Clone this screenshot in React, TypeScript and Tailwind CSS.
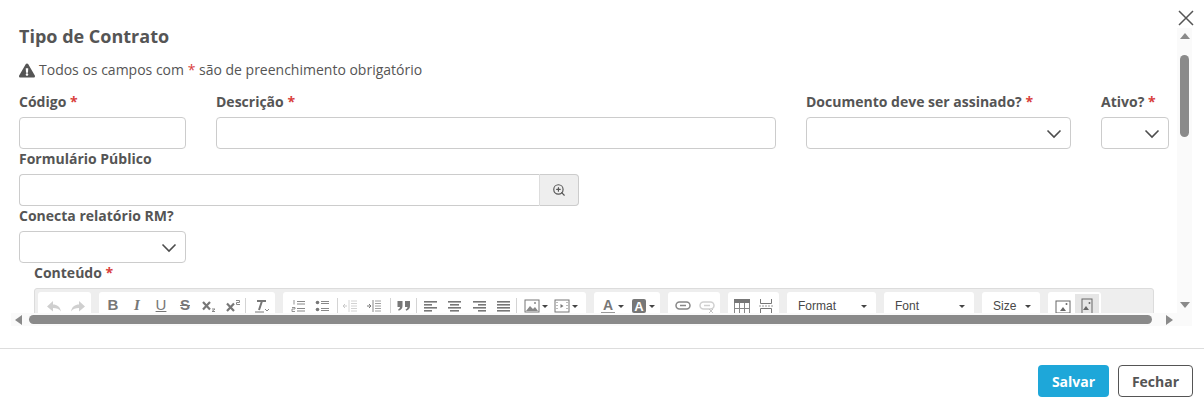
import type { ReactNode } from "react";
import { ZoomIn } from "lucide-react";
import { FaExclamationTriangle } from "react-icons/fa";

const Req = () => <span className="text-[#d9403c]"> *</span>;

function Label({ children }: { children: ReactNode }) {
  return <label className="block h-[19px] text-[14px] leading-[19px] font-bold text-[#555] whitespace-nowrap">{children}</label>;
}

function Chevron() {
  return (
    <svg width="16" height="10" viewBox="0 0 16 10" fill="none" stroke="#4d4d4d" strokeWidth="1.6" className="absolute right-[8px] top-[11px]">
      <path d="M1.5 1.5 8 8l6.5-6.5" />
    </svg>
  );
}

function Box({ className = "", chevron = false }: { className?: string; chevron?: boolean }) {
  return (
    <div className={`relative mt-[6px] h-[32px] rounded-[4px] border border-[#ccc] bg-white ${className}`}>
      {chevron && <Chevron />}
    </div>
  );
}

function Slot({ children, w = "w-[24px]" }: { children: ReactNode; w?: string }) {
  return <div className={`flex h-[16px] shrink-0 items-start justify-center ${w}`}>{children}</div>;
}

function Sep({ className = "" }: { className?: string }) {
  return <div className={`h-[16px] w-px shrink-0 bg-[#d4d4d4] ${className}`} />;
}

function Caret() {
  return <div className="h-0 w-0 border-x-[3px] border-t-[3px] border-x-transparent border-t-[#444]" />;
}

function Icon({ children, w = 16 }: { children: ReactNode; w?: number }) {
  return (
    <svg width={w} height="16" viewBox={`0 0 ${w} 16`} fill="none" className="shrink-0">
      {children}
    </svg>
  );
}

function Letter({ ch, cls }: { ch: string; cls: string }) {
  return <span className={`block h-[14px] text-[15px] leading-[14px] text-[#777] ${cls}`}>{ch}</span>;
}

function Lines({ rows, color = "#777" }: { rows: [number, number][]; color?: string }) {
  return (
    <Icon>
      {rows.map(([x, w], i) => (
        <rect key={i} x={x} y={3 + i * 3} width={w} height="1.6" fill={color} />
      ))}
    </Icon>
  );
}

function Group({ className, children }: { className: string; children: ReactNode }) {
  return <div className={`flex h-[36px] shrink-0 items-start rounded-[3px] bg-white pt-[6px] ${className}`}>{children}</div>;
}

function Combo({ label, className }: { label: string; className: string }) {
  return (
    <div className={`relative h-[36px] shrink-0 rounded-[3px] bg-white pl-[11px] pt-[5px] font-['Liberation_Sans',sans-serif] text-[12px] leading-[18px] text-[#484848] ${className}`}>
      {label}
      <div className="absolute right-[9px] top-[13px]">
        <Caret />
      </div>
    </div>
  );
}

function Toolbar() {
  return (
    <div className="ml-[15px] flex h-[40px] w-[1120px] gap-2 rounded-[3px] border border-[#dcdcdc] bg-[#eee] pl-[3px] pt-[3px]">
      <Group className="w-[53px] pl-[4px]">
        <Slot>
          <Icon><path d="M1 8.5 7 3v3.5c4 0 7 2 8 7-2-3-4.500-3.500-8-3.500v3.500z" fill="#cfcfcf" /></Icon>
        </Slot>
        <Slot>
          <Icon><path d="M15 8.500 9 3v3.500c-4 0-7 2-8 7 2-3 4.500-3.500 8-3.500v3.500z" fill="#cfcfcf" /></Icon>
        </Slot>
      </Group>
      <Group className="w-[176px] pl-[2px]">
        <Slot><Letter ch="B" cls="font-bold font-['Liberation_Sans',sans-serif]" /></Slot>
        <Slot><Letter ch="I" cls="font-bold italic font-['Liberation_Serif',serif]" /></Slot>
        <Slot><Letter ch="U" cls="underline font-['Liberation_Sans',sans-serif]" /></Slot>
        <Slot><Letter ch="S" cls="font-bold line-through font-['Liberation_Sans',sans-serif]" /></Slot>
        <Slot>
          <Icon>
            <path d="M2 4l7 7.500M9 4l-7 7.500" stroke="#777" strokeWidth="2.2" />
            <path d="M11 11h3l-3 2.500h3" stroke="#888" />
          </Icon>
        </Slot>
        <Slot>
          <Icon w={17}>
            <path d="M2 5.500l7 7.500M9 5.500l-7 7.500" stroke="#777" strokeWidth="2.2" />
            <path d="M11 2.500h3.500v2h-3v2h3.500" stroke="#888" />
          </Icon>
        </Slot>
        <Sep />
        <Slot w="w-[24px] ml-[4px]">
          <Icon>
            <path d="M3 3h9M8 3l-3 9" stroke="#777" strokeWidth="2" />
            <path d="M1 14h9" stroke="#777" />
            <path d="M11 11l2 2 2-2" stroke="#888" />
          </Icon>
        </Slot>
      </Group>
      <Group className="w-[303px] pl-[3px]">
        <Slot>
          <Icon w={14}>
            <path d="M3 2v4.500M1 9.500h3V11H1v2.500h3" stroke="#888" strokeWidth="0.9" />
            <path d="M6 3.500h8M6 6h8M6 10.500h8M6 13h8" stroke="#888" strokeWidth="1.1" />
          </Icon>
        </Slot>
        <Slot>
          <Icon w={14}>
            <circle cx="2.500" cy="4.500" r="1.800" fill="#777" />
            <circle cx="2.500" cy="11.500" r="1.800" fill="#777" />
            <path d="M6 3.500h8M6 5.500h8M6 10.500h8M6 12.500h8" stroke="#888" strokeWidth="1" />
          </Icon>
        </Slot>
        <Sep className="ml-[3px]" />
        <Slot>
          <Icon>
            <path d="M9 3h6M9 5.500h6M9 8h6M9 10.500h6M9 13h6" stroke="#d2d2d2" />
            <path d="M7 2v12" stroke="#d6d6d6" />
            <path d="M1 8h4M3 6L1 8l2 2" stroke="#c9c9c9" />
          </Icon>
        </Slot>
        <Slot>
          <Icon>
            <path d="M9 3h6M9 5.500h6M9 8h6M9 10.500h6M9 13h6" stroke="#a0a0a0" />
            <path d="M7 2v12" stroke="#888" />
            <path d="M1 8h4M3 6l2 2-2 2" stroke="#777" />
          </Icon>
        </Slot>
        <Sep className="ml-[4px]" />
        <Slot w="w-[24px] ml-[1px]">
          <Icon>
            <path d="M1.500 3h5v5c0 2.500-1.500 4-3.800 4.800l-.6-1.200c1.200-.6 1.800-1.400 1.900-2.600H1.500zM9 3h5v5c0 2.500-1.500 4-3.800 4.800l-.6-1.200c1.200-.6 1.800-1.400 1.900-2.600H9z" fill="#777" />
          </Icon>
        </Slot>
        <Sep />
        <Slot w="w-[24px] ml-[2px]"><Lines rows={[[1, 13], [1, 8], [1, 13], [1, 8]]} /></Slot>
        <Slot><Lines rows={[[1, 13], [3, 9], [1, 13], [3, 9]]} /></Slot>
        <Slot><Lines rows={[[2, 13], [7, 8], [2, 13], [7, 8]]} /></Slot>
        <Slot><Lines rows={[[2, 13], [2, 13], [2, 13], [2, 13]]} /></Slot>
        <Sep className="ml-[1px]" />
        <div className="ml-[7px] flex h-[16px] w-[30px] shrink-0 items-start gap-[2px]">
          <Icon>
            <rect x="1" y="2" width="14" height="12" stroke="#777" fill="#fff" />
            <path d="M2 13l4-5 3 3 2-2 3 4z" fill="#888" />
            <circle cx="11" cy="5" r="1" fill="#888" />
          </Icon>
          <div className="mt-[7px]"><Caret /></div>
        </div>
        <div className="flex h-[16px] shrink-0 items-start gap-[2px]">
          <Icon>
            <rect x="1" y="2" width="14" height="12" stroke="#777" fill="#fff" />
            <path d="M6.500 6v4l3-2z" fill="#777" />
            <path d="M3 4v1M3 7v1M3 10v1M13 4v1M13 7v1M13 10v1" stroke="#777" />
          </Icon>
          <div className="mt-[7px]"><Caret /></div>
        </div>
      </Group>
      <Group className="w-[66px] pl-[6px]">
        <div className="flex h-[16px] w-[31px] shrink-0 items-start gap-[2px]">
          <Icon>
            <text x="8" y="12" textAnchor="middle" fontFamily="Liberation Sans" fontWeight="bold" fontSize="14" fill="#777">A</text>
            <rect x="1" y="14" width="14" height="1.500" fill="#999" />
          </Icon>
          <div className="mt-[7px]"><Caret /></div>
        </div>
        <div className="flex h-[16px] shrink-0 items-start gap-[2px]">
          <Icon>
            <rect x="1" y="1" width="14" height="14" rx="2" fill="#777" />
            <text x="8" y="13" textAnchor="middle" fontFamily="Liberation Sans" fontWeight="bold" fontSize="13" fill="#fff">A</text>
          </Icon>
          <div className="mt-[7px]"><Caret /></div>
        </div>
      </Group>
      <Group className="w-[52px] pl-[3px]">
        <Slot>
          <Icon>
            <rect x="1" y="4" width="14" height="7" rx="3.500" stroke="#888" strokeWidth="1.500" />
            <path d="M5 7.500h6" stroke="#888" strokeWidth="1.500" />
          </Icon>
        </Slot>
        <Slot>
          <Icon>
            <rect x="1" y="4" width="14" height="7" rx="3.500" stroke="#d0d0d0" strokeWidth="1.500" />
            <path d="M5 7.500h6" stroke="#d0d0d0" strokeWidth="1.500" />
            <path d="M10 11l4 4M14 11l-4 4" stroke="#c4c4c4" />
          </Icon>
        </Slot>
      </Group>
      <Group className="w-[51px] pl-[2px]">
        <Slot>
          <Icon>
            <rect x="0" y="1" width="16" height="4" fill="#777" />
            <path d="M.5 5v10.500h15V5M5.500 5v10M10.500 5v10M0 10.500h16" stroke="#888" />
          </Icon>
        </Slot>
        <Slot>
          <Icon>
            <path d="M2.500 1v4.500h11V1M2.500 15v-4.500h11V15" stroke="#777" />
            <path d="M1 8h14" stroke="#999" strokeDasharray="2 1" />
          </Icon>
        </Slot>
      </Group>
      <Combo label="Format" className="w-[89px]" />
      <Combo label="Font" className="w-[90px]" />
      <Combo label="Size" className="w-[58px]" />
      <Group className="w-[53px] pl-[3px]">
        <Slot>
          <Icon>
            <rect x="1" y="3" width="14" height="12" stroke="#666" />
            <path d="M5 13l3-4 3 4z" fill="#666" />
            <circle cx="11.500" cy="6" r="1" fill="#666" />
          </Icon>
        </Slot>
        <div className="-mt-[4px] flex h-[30px] w-[24px] shrink-0 justify-center bg-[#e6e6e6] pt-[4px]">
          <Icon w={12}>
            <rect x="1" y="1" width="10" height="15" stroke="#666" />
            <path d="M2 12l3-4 3 4z" fill="#666" />
            <circle cx="8.500" cy="5" r="1" fill="#666" />
          </Icon>
        </div>
      </Group>
    </div>
  );
}

function Form() {
  return (
    <div className="h-[293px] overflow-hidden pl-[19px] pt-[4px]">
      <h2 className="h-[24px] text-[18px] leading-[24px] font-bold text-[#555]">Tipo de Contrato</h2>
      <p className="mt-[12px] flex h-[20px] items-center gap-[4px] text-[14px] leading-[20px] text-[#555]">
        <FaExclamationTriangle className="h-[15px] w-[16px] text-[#555]" />
        <span>
          Todos os campos com <span className="text-[#d9403c]">*</span> são de preenchimento obrigatório
        </span>
      </p>
      <div className="mt-[12px] flex gap-[30px]">
        <div className="w-[167px]">
          <Label>Código<Req /></Label>
          <Box />
        </div>
        <div className="w-[560px]">
          <Label>Descrição<Req /></Label>
          <Box />
        </div>
        <div className="w-[265px]">
          <Label>Documento deve ser assinado?<Req /></Label>
          <Box chevron />
        </div>
        <div className="w-[68px]">
          <Label>Ativo?<Req /></Label>
          <Box chevron />
        </div>
      </div>
      <Label>Formulário Público</Label>
      <div className="mt-[6px] flex h-[32px] w-[560px]">
        <div className="flex-1 rounded-l-[4px] border border-r-0 border-[#ccc] bg-white" />
        <div className="flex w-[40px] items-center justify-center rounded-r-[4px] border border-[#ccc] border-l-[#ddd] bg-[#eee]">
          <ZoomIn className="h-[14px] w-[14px] text-[#555]" strokeWidth={2} />
        </div>
      </div>
      <Label>Conecta relatório RM?</Label>
      <Box chevron className="w-[167px]" />
      <div className="pl-[15px]">
        <Label>Conteúdo<Req /></Label>
      </div>
      <div className="mt-[6px]">
        <Toolbar />
      </div>
    </div>
  );
}

export default function App() {
  return (
    <div className="relative h-[408px] w-[1204px] overflow-hidden bg-white font-['Open_Sans',sans-serif]">
      <button className="absolute right-[10px] top-[10px]" aria-label="Fechar">
        <svg width="16" height="16" viewBox="0 0 16 16" stroke="#555" strokeWidth="1.500">
          <path d="M1 1l14 14M15 1L1 15" />
        </svg>
      </button>

      <div className="flex w-[1192px] pt-[20px]">
        <div className="w-[1177px]">
          <Form />
          {/* horizontal scrollbar */}
          <div className="ml-[11px] flex h-[13px] items-center bg-[#fafafa] pl-[4px]">
            <div className="h-0 w-0 border-y-[5px] border-r-[7px] border-y-transparent border-r-[#8a8a8a]" />
            <div className="ml-[7px] h-[9px] w-[1123px] rounded-full bg-[#8a8a8a]" />
            <div className="ml-[14px] h-0 w-0 border-y-[5px] border-l-[7px] border-y-transparent border-l-[#8a8a8a]" />
          </div>
        </div>
        {/* vertical scrollbar */}
        <div className="mt-[8px] flex h-[298px] w-[15px] flex-col items-center bg-[#fafafa] pt-[5px]">
          <div className="h-0 w-0 border-x-[5px] border-b-[6px] border-x-transparent border-b-[#8a8a8a]" />
          <div className="mt-[16px] h-[82px] w-[9px] rounded-full bg-[#8a8a8a]" />
          <div className="mt-[165px] h-0 w-0 border-x-[5px] border-t-[6px] border-x-transparent border-t-[#8a8a8a]" />
        </div>
      </div>

      <div className="mt-[22px] flex justify-end gap-[9px] border-t border-[#ddd] pr-[11px] pt-[16px]">
        <button className="h-[32px] w-[71px] rounded-[4px] bg-[#1ea7d9] text-[14px] font-bold text-white">Salvar</button>
        <button className="h-[32px] w-[75px] rounded-[4px] border border-[#555] bg-white text-[14px] font-bold text-[#555]">Fechar</button>
      </div>
    </div>
  );
}
